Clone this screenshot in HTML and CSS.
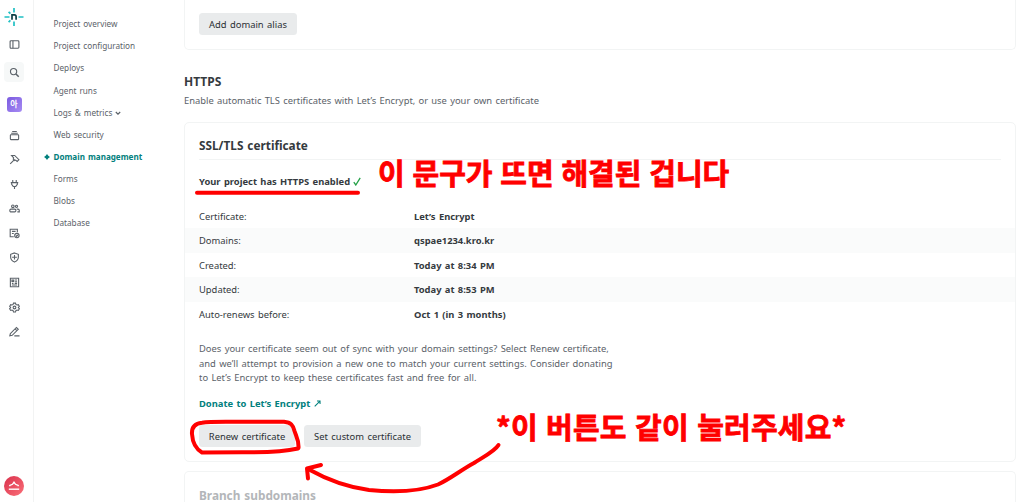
FILE: index.html
```
<!DOCTYPE html>
<html lang="en">
<head>
    <meta charset="UTF-8">
    <meta name="viewport" content="width=device-width, initial-scale=1.0">
    <title>Domain management</title>
    <link rel="stylesheet" href="styles.css">
</head>
<body>
    <div class="app">
        <aside class="rail">
            <a class="rail-logo" href="#">
                <svg width="20" height="20" viewBox="0 0 20 20" fill="none">
                    <path d="M10 1v4.5M10 14.5V19M.5 10h5M14.5 10h5M4.6 15.2l1.8-1.8M4.6 4.8l1.8 1.8" stroke="#20c0c4" stroke-width="1.7"/>
                    <path d="M8 12.8V7.8h2.4c1.2 0 1.7.6 1.7 1.7v3.3" stroke="#0e3f45" stroke-width="1.7"/>
                </svg>
            </a>
            <a class="rail-item panel" href="#">
                <svg viewBox="0 0 12 12"><rect x="1.2" y="1.9" width="9.6" height="8.2" rx="1"/><path d="M4.3 2v8"/></svg>
            </a>
            <a class="rail-item search" href="#">
                <svg viewBox="0 0 12 12"><circle cx="5" cy="5" r="3.4"/><path d="M7.6 7.6l3 3" stroke-width="1.7"/></svg>
            </a>
            <a class="team" href="#">아</a>
            <nav class="rail-nav">
                <a class="rail-item" href="#"><svg viewBox="0 0 12 12"><rect x="1.5" y="5.2" width="9" height="5.3" rx=".6"/><path d="M2.4 3.5h7.2M3.5 1.7h5"/></svg></a>
                <a class="rail-item" href="#"><svg viewBox="0 0 12 12"><path d="M1.3 10.7l4.9-4.9M2.8 1.6h3.4l4.6 4.6-1.9 1.9-1.6-1.5-1 .5-1.7-1.6.5-1.3z"/></svg></a>
                <a class="rail-item" href="#"><svg viewBox="0 0 12 12"><path d="M4.1 1v2.8M7.9 1v2.8M1.9 4h8.2M2.9 4v1.8l1.7 2.3h2.8l1.7-2.3V4M6 8.2V11"/></svg></a>
                <a class="rail-item" href="#"><svg viewBox="0 0 12 12"><circle cx="4.2" cy="3.6" r="1.4"/><circle cx="8.2" cy="3.6" r="1.2"/><rect x=".9" y="6.7" width="6.6" height="3" rx="1.3"/><path d="M8.4 6.7h1.4c.8 0 1.4.6 1.4 1.4v1.6H9.1"/></svg></a>
                <a class="rail-item" href="#"><svg viewBox="0 0 12 12"><path d="M5.2 9.6H1.3V1.4h7.8v3.2M3.2 3.7h4M3.2 6h2"/><circle cx="8.6" cy="8.3" r="2.4"/><path d="M7.5 8.3l.8.8 1.4-1.5"/></svg></a>
                <a class="rail-item" href="#"><svg viewBox="0 0 12 12"><path d="M6 1l4.2 1.5v3.3c0 2.3-1.5 4-4.2 5.2-2.7-1.2-4.2-2.9-4.2-5.2V2.5zM6 3.3v5M3.4 5.8h5.2"/></svg></a>
                <a class="rail-item" href="#"><svg viewBox="0 0 12 12"><path d="M1.5 1.3h9v9.4h-9zM3.2 3.4h2v1.5h-2zM6.6 3.3h2.2M6.6 5.1h2.2M3.2 6.9h1.7M6.2 6.9h2.6M3.2 8.7h5.6"/></svg></a>
                <a class="rail-item" href="#"><svg viewBox="0 0 12 12"><path d="M4.9 1.2h2.2l.4 1.4 1.3.7 1.4-.4 1.1 1.9-1.1 1.1v.3l1.1 1.1-1.1 1.9-1.4-.4-1.3.7-.4 1.4H4.9l-.4-1.4-1.3-.7-1.4.4L.7 7.3l1.1-1.1v-.3L.7 4.8l1.1-1.9 1.4.4 1.3-.7z"/><circle cx="6" cy="6" r="1.5"/></svg></a>
                <a class="rail-item" href="#"><svg viewBox="0 0 12 12"><path d="M1.5 8.2l6.6-6.6 2 2-6.6 6.6-2.6.5zM6.6 3.1l2 2M5.8 10.800h5.700"/></svg></a>
            </nav>
            <a class="avatar" href="#">
                <svg width="12" height="12" viewBox="0 0 12 12"><path d="M1.8 6.2V5.4L4.5 4.3 6 2.2l1.5 2.1 2.7 1.1v.8"/><path d="M.8 9.2h10.4"/></svg>
            </a>
        </aside>

        <nav class="sidebar">
            <a href="#">Project overview</a>
            <a href="#">Project configuration</a>
            <a href="#">Deploys</a>
            <a href="#">Agent runs</a>
            <a href="#">Logs &amp; metrics <svg class="chevron" viewBox="0 0 6 6"><path d="M.8 2L3 4.1 5.2 2"/></svg></a>
            <a href="#">Web security</a>
            <a class="active" href="#"><svg class="marker" viewBox="0 0 6 6"><path d="M3 0l1.3 1.7L6 3 4.3 4.3 3 6 1.7 4.3 0 3l1.7-1.3z"/></svg>Domain management</a>
            <a href="#">Forms</a>
            <a href="#">Blobs</a>
            <a href="#">Database</a>
        </nav>

        <main class="content">
            <section class="card domains">
                <button class="btn btn-alias">Add domain alias</button>
            </section>

            <header class="section-header">
                <h2>HTTPS</h2>
                <p>Enable automatic TLS certificates with Let’s Encrypt, or use your own certificate</p>
            </header>

            <section class="card certificate">
                <h3>SSL/TLS certificate</h3>
                <p class="status">Your project has HTTPS enabled <svg class="check" viewBox="0 0 8 9"><path d="M.8 5.2l2 2.8L7.2.8"/></svg></p>
                <dl class="details">
                    <div class="row"><dt>Certificate:</dt><dd>Let’s Encrypt</dd></div>
                    <div class="row"><dt>Domains:</dt><dd>qspae1234.kro.kr</dd></div>
                    <div class="row"><dt>Created:</dt><dd>Today at 8:34 PM</dd></div>
                    <div class="row"><dt>Updated:</dt><dd>Today at 8:53 PM</dd></div>
                    <div class="row"><dt>Auto-renews before:</dt><dd>Oct 1 (in 3 months)</dd></div>
                </dl>
                <p class="help">Does your certificate seem out of sync with your domain settings? Select Renew certificate,<br>
                    and we’ll attempt to provision a new one to match your current settings. Consider donating<br>
                    to Let’s Encrypt to keep these certificates fast and free for all.</p>
                <a class="donate" href="#">Donate to Let’s Encrypt <svg class="arrow" viewBox="0 0 8 8"><path d="M.8 7.2L6.8 1.2M3.4 1.2h3.5v3.3"/></svg></a>
                <div class="actions">
                    <button class="btn btn-renew">Renew certificate</button>
                    <button class="btn btn-custom">Set custom certificate</button>
                </div>
            </section>

            <section class="card branch">
                <h3>Branch subdomains</h3>
            </section>
        </main>
    </div>

    <!-- hand-drawn notes over the page -->
    <div class="notes">
        <svg width="1024" height="502" viewBox="0 0 1024 502">
            <path d="M197 192.7H358"/>
            <path d="M298 448.5C283 452 262 452.5 242 452.2L202 452.5C196 449 192.5 442 192 434C191.5 427 195 423.5 202 422.7C210 421.5 225 422 240 421.7L284 421.8C291 422.5 293 425 294.5 431C296 436 299 440 298.5 448"/>
            <path d="M498.5 445C495 451 485 456 474 463C461 470 450 479 438 484.5C418 492 393 492.5 369 490C346 487 326 479 309 469.5"/>
            <path d="M321 465L307 468.5L308 478.5"/>
        </svg>
        <span class="note note-status" lang="ko">이 문구가 뜨면 해결된 겁니다</span>
        <span class="note note-button" lang="ko">*이 버튼도 같이 눌러주세요*</span>
    </div>
</body>
</html>
```
FILE: styles.css
```
* {
    box-sizing: border-box;
}
body {
    margin: 0;
    height: 502px;
    overflow: hidden;
    font-family: 'Noto Sans', 'Noto Sans CJK KR', sans-serif;
    font-size: 9.4px;
    word-spacing: 0.9px;
    color: #353a3e;
    background: #fff;
}
a {
    color: inherit;
    text-decoration: none;
}
h2, h3, p, dl, dd {
    margin: 0;
}
svg {
    fill: none;
    stroke: currentColor;
}
.app {
    display: flex;
    height: 502px;
    overflow: hidden;
}

/* icon rail */
.rail {
    width: 34px;
    padding: 7px 5px 6px 0;
    border-right: 1px solid #f2f3f3;
    display: flex;
    flex-direction: column;
    align-items: center;
    color: #5b6269;
}
.rail-logo {
    height: 20px;
}
.rail-item {
    width: 20px;
    height: 20px;
    display: flex;
    align-items: center;
    justify-content: center;
    border-radius: 4px;
}
.rail-item svg {
    width: 11px;
    height: 11px;
    stroke-width: 1.2;
}
.panel {
    margin-top: 7px;
}
.search {
    margin-top: 8px;
    background: #f6f8f8;
}
.team {
    width: 15px;
    height: 15px;
    margin-top: 15px;
    border-radius: 3px;
    background: linear-gradient(135deg, #7b5be0, #a68bf3);
    color: #fff;
    font-size: 8px;
    font-weight: 700;
    line-height: 14px;
    text-align: center;
}
.rail-nav {
    margin-top: 13px;
    display: flex;
    flex-direction: column;
    gap: 4.6px;
}
.avatar {
    width: 20px;
    height: 20px;
    margin-top: auto;
    border-radius: 50%;
    background: linear-gradient(135deg, #d9304c, #fb7079);
    color: #fff;
    display: flex;
    align-items: center;
    justify-content: center;
}
.avatar svg {
    stroke-width: 1.4;
}

/* project menu */
.sidebar {
    width: 150px;
    padding: 13.2px 0 0 19.5px;
    font-size: 8.2px;
    color: #5b6269;
}
.sidebar a {
    display: block;
    position: relative;
    height: 22.15px;
    line-height: 22px;
    white-space: nowrap;
}
.sidebar .active {
    color: #02807d;
    font-size: 8.1px;
    font-weight: 700;
}
.marker {
    position: absolute;
    left: -10px;
    top: 8px;
    width: 6px;
    height: 6px;
    fill: currentColor;
    stroke: none;
}
.chevron {
    width: 6px;
    height: 6px;
    stroke-width: 1.2;
}

/* page */
.content {
    width: 832px;
}
.card {
    padding: 0 14px;
    border: 1px solid #f2f4f4;
    border-radius: 5px;
}
.domains {
    height: 50px;
    padding-top: 13px;
    border-top: none;
    border-radius: 0 0 5px 5px;
}
.btn {
    height: 22px;
    padding: 0;
    border: none;
    border-radius: 3.5px;
    background: #e9ebec;
    font-family: inherit;
    font-size: 9.4px;
    word-spacing: 1px;
    color: #2b3034;
}
.btn-alias {
    width: 98px;
}
.btn-renew {
    width: 96px;
}
.btn-custom {
    width: 117px;
}
.section-header {
    height: 72px;
    padding-top: 23px;
}
.section-header h2 {
    font-size: 12px;
    line-height: 18px;
}
.section-header p {
    margin-top: 2px;
    line-height: 15px;
    word-spacing: 0.8px;
    color: #5b6269;
}
.certificate {
    height: 340px;
    padding-top: 12px;
}
h3 {
    font-size: 11.8px;
    line-height: 20px;
}
.certificate h3 {
    height: 25px;
    border-bottom: 1px solid #f2f4f4;
}
.status {
    margin-top: 14px;
    line-height: 15px;
    font-weight: 700;
}
.check {
    width: 8px;
    height: 9px;
    stroke: #24a148;
    stroke-width: 1.3;
    vertical-align: -1px;
}
.details {
    margin: 14.5px -14px 0;
}
.row {
    display: grid;
    grid-template-columns: 215px 1fr;
    height: 24.6px;
    padding: 0 14px;
    line-height: 25px;
}
.row:nth-child(even) {
    background: #fafbfb;
}
.row dd {
    font-weight: 700;
}
.help {
    margin-top: 15.5px;
    line-height: 14.75px;
    color: #5b6269;
    white-space: nowrap;
}
.donate {
    display: block;
    margin-top: 9.5px;
    line-height: 15px;
    font-weight: 700;
    color: #02807d;
}
.arrow {
    width: 7px;
    height: 7px;
    stroke-width: 1.2;
}
.actions {
    display: flex;
    gap: 9px;
    margin-top: 14.5px;
}
.branch {
    height: 31px;
    margin-top: 9px;
    padding-top: 13px;
    padding-bottom: 0;
    border-bottom: none;
    border-radius: 5px 5px 0 0;
    color: #b3b6b9;
}
.branch h3 {
    height: 17px;
}

/* notes */
.notes {
    position: absolute;
    top: 0;
    left: 0;
    width: 1024px;
    height: 502px;
    overflow: hidden;
    pointer-events: none;
    color: #f00;
}
.notes svg {
    display: block;
    stroke-width: 4;
    stroke-linecap: round;
    stroke-linejoin: round;
}
.note {
    position: absolute;
    font-family: 'Noto Sans CJK KR', sans-serif;
    font-size: 29px;
    font-weight: 700;
    line-height: 40px;
    word-spacing: 0;
    white-space: nowrap;
    -webkit-text-stroke: 0.8px #f00;
}
.note-status {
    left: 378px;
    top: 152px;
    letter-spacing: -0.1px;
}
.note-button {
    left: 496px;
    top: 406px;
    letter-spacing: 0.2px;
}
```
